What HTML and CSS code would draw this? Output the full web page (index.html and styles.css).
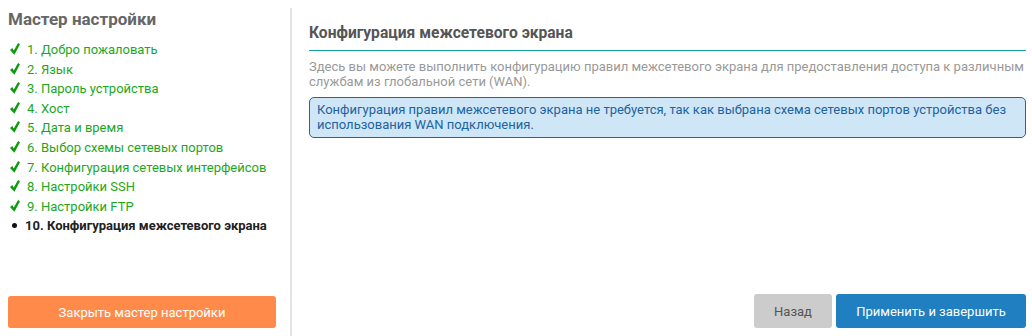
FILE: index.html
```html
<!DOCTYPE html>
<html lang="ru">
<head>
  <meta charset="UTF-8">
  <title>Мастер настройки</title>
  <link rel="stylesheet" href="styles.css">
</head>
<body>
  <div class="wizard">
    <div class="wizard-side">
      <h2 class="side-title">Мастер настройки</h2>
      <ul class="steps">
        <li class="step done"><svg class="check" viewBox="0 0 10 12"><polygon points="0,7 2.3,5.1 3.8,7.6 8.1,0 10,1.3 4.4,11.8"/></svg>1. Добро пожаловать</li>
        <li class="step done"><svg class="check" viewBox="0 0 10 12"><polygon points="0,7 2.3,5.1 3.8,7.6 8.1,0 10,1.3 4.4,11.8"/></svg>2. Язык</li>
        <li class="step done"><svg class="check" viewBox="0 0 10 12"><polygon points="0,7 2.3,5.1 3.8,7.6 8.1,0 10,1.3 4.4,11.8"/></svg>3. Пароль устройства</li>
        <li class="step done"><svg class="check" viewBox="0 0 10 12"><polygon points="0,7 2.3,5.1 3.8,7.6 8.1,0 10,1.3 4.4,11.8"/></svg>4. Хост</li>
        <li class="step done"><svg class="check" viewBox="0 0 10 12"><polygon points="0,7 2.3,5.1 3.8,7.6 8.1,0 10,1.3 4.4,11.8"/></svg>5. Дата и время</li>
        <li class="step done"><svg class="check" viewBox="0 0 10 12"><polygon points="0,7 2.3,5.1 3.8,7.6 8.1,0 10,1.3 4.4,11.8"/></svg>6. Выбор схемы сетевых портов</li>
        <li class="step done"><svg class="check" viewBox="0 0 10 12"><polygon points="0,7 2.3,5.1 3.8,7.6 8.1,0 10,1.3 4.4,11.8"/></svg>7. Конфигурация сетевых интерфейсов</li>
        <li class="step done"><svg class="check" viewBox="0 0 10 12"><polygon points="0,7 2.3,5.1 3.8,7.6 8.1,0 10,1.3 4.4,11.8"/></svg>8. Настройки SSH</li>
        <li class="step done"><svg class="check" viewBox="0 0 10 12"><polygon points="0,7 2.3,5.1 3.8,7.6 8.1,0 10,1.3 4.4,11.8"/></svg>9. Настройки FTP</li>
        <li class="step current">10. Конфигурация межсетевого экрана</li>
      </ul>
      <button class="btn btn-close">Закрыть мастер настройки</button>
    </div>
    <div class="wizard-main">
      <h3 class="main-title">Конфигурация межсетевого экрана</h3>
      <p class="main-desc">Здесь вы можете выполнить конфигурацию правил межсетевого экрана для предоставления доступа к различным службам из глобальной сети (WAN).</p>
      <div class="info-box">Конфигурация правил межсетевого экрана не требуется, так как выбрана схема сетевых портов устройства без использования WAN подключения.</div>
      <div class="actions">
        <button class="btn btn-back">Назад</button>
        <button class="btn btn-apply">Применить и завершить</button>
      </div>
    </div>
  </div>
</body>
</html>
```

FILE: styles.css
```css
html, body {
  margin: 0;
  background: #fff;
}
body {
  font-family: Roboto, "Liberation Sans", sans-serif;
  font-size: 13px;
}
.wizard {
  display: flex;
  height: 336px;
  box-sizing: border-box;
  padding-top: 8px;
}
.wizard-side {
  width: 292px;
  box-sizing: border-box;
  padding: 0 16px 8px 8px;
  display: flex;
  flex-direction: column;
  border-right: 2px solid #e3e3e3;
}
.side-title {
  margin: 1px 0 10px;
  font-size: 17px;
  font-weight: bold;
  color: #666;
  line-height: 21px;
}
.steps {
  list-style: none;
  margin: 0;
  padding: 0;
  flex: 1;
}
.step {
  line-height: 19.6px;
  padding-left: 1px;
}
.step.done {
  color: #1ca71c;
}
.check {
  width: 10px;
  height: 12px;
  margin: 0 7px 0 1px;
  vertical-align: -1px;
  fill: #0e9a0e;
}
.step.current {
  color: #222;
  font-weight: bold;
}
.step.current::before {
  content: "";
  display: inline-block;
  width: 5px;
  height: 5px;
  border-radius: 50%;
  background: #111;
  margin: 0 8px 2px 3px;
  vertical-align: middle;
}
.btn {
  font-family: inherit;
  font-size: 13px;
  border: none;
  border-radius: 3px;
  height: 32px;
  cursor: pointer;
}
.btn-close {
  width: 268px;
  background: #ff8a4a;
  color: #fff;
}
.wizard-main {
  flex: 1;
  padding: 0 6px 8px 17px;
  display: flex;
  flex-direction: column;
}
.main-title {
  margin: 15px 0 0;
  padding-bottom: 7px;
  font-size: 15.6px;
  font-weight: bold;
  color: #555;
  line-height: 20px;
  border-bottom: 1px solid #16a0a0;
}
.main-desc {
  margin: 8px 0 8px;
  color: #999;
  line-height: 15px;
}
.info-box {
  background: #cfe6f7;
  border: 1px solid #1d6a9e;
  border-radius: 5px;
  color: #2063a0;
  padding: 4px 7px 5px;
  line-height: 15px;
}
.actions {
  margin-top: auto;
  display: flex;
  justify-content: flex-end;
  gap: 4px;
}
.btn-back {
  width: 78px;
  background: #cccccc;
  color: #555;
  height: 34px;
}
.btn-apply {
  width: 190px;
  background: #1f7fc0;
  color: #fff;
  height: 34px;
}
```
